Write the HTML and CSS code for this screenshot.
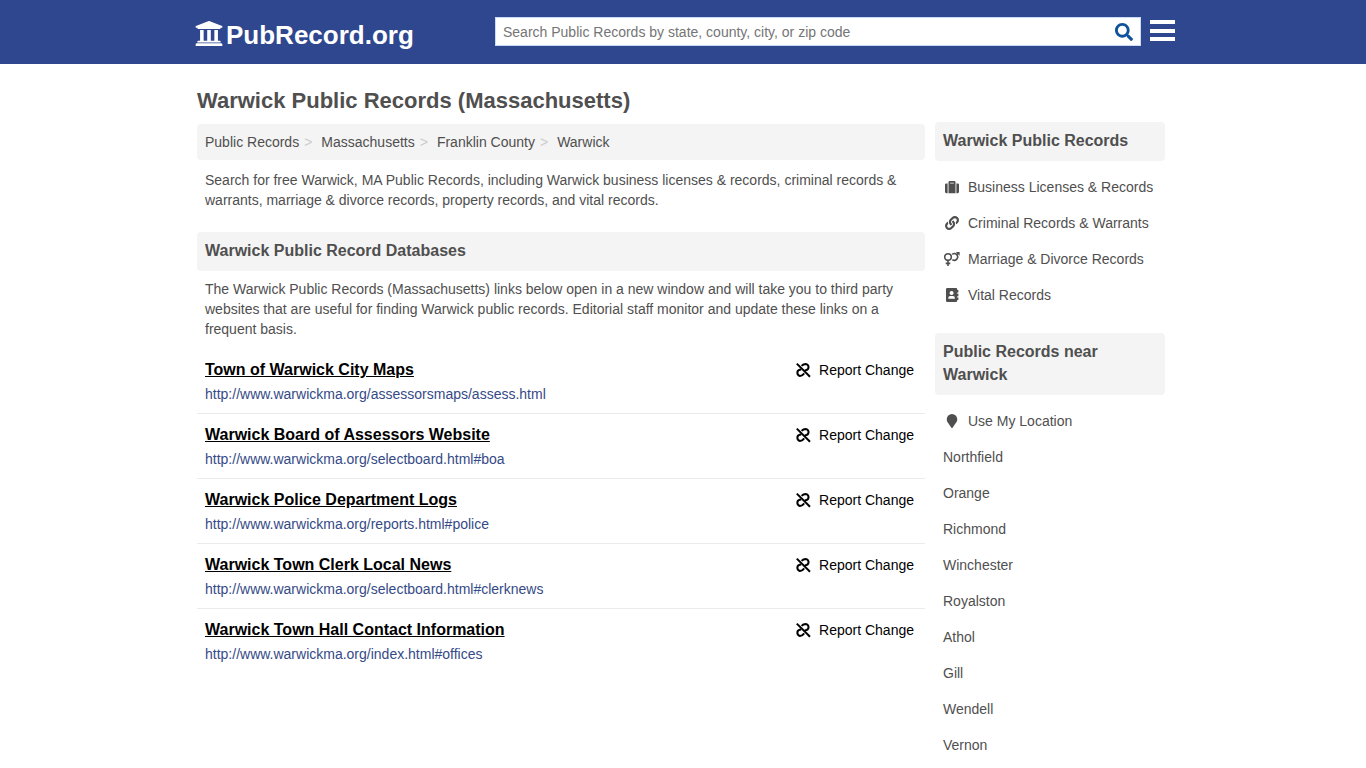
FILE: index.html
```html
<!DOCTYPE html>
<html lang="en">
<head>
<meta charset="utf-8">
<meta name="viewport" content="width=device-width, initial-scale=1">
<title>Warwick Public Records (Massachusetts)</title>
<link rel="stylesheet" href="styles.css">
</head>
<body>
<svg class="sprite" aria-hidden="true">
  <symbol id="i-unlink" viewBox="0 0 16 16"><g fill="none" stroke="currentColor" stroke-width="2"><path d="M1.800 1.600L15 14.800"/><path d="M6.600 3.900C8 2.200 9.300 1.900 10.800 1.900A3.200 3.200 0 0 1 11.600 8L9.800 8.200"/><path d="M6.200 7.400L4.600 7.700A3.200 3.200 0 0 0 5 13.900C7 13.900 8 12.900 9.200 11.300"/></g></symbol>
</svg>
<header class="topbar">
  <div class="shell topbar-inner">
    <a class="brand" href="#">
      <svg class="brand-icon" viewBox="16 32 480 448" aria-hidden="true"><path d="M496 128v16a8 8 0 0 1-8 8h-24v12c0 6.627-5.373 12-12 12H60c-6.627 0-12-5.373-12-12v-12H24a8 8 0 0 1-8-8v-16a8 8 0 0 1 4.941-7.392l232-88a7.996 7.996 0 0 1 6.118 0l232 88A8 8 0 0 1 496 128zm-24 304H40c-13.255 0-24 10.745-24 24v16a8 8 0 0 0 8 8h464a8 8 0 0 0 8-8v-16c0-13.255-10.745-24-24-24zM96 192v192H60c-6.627 0-12 5.373-12 12v20h416v-20c0-6.627-5.373-12-12-12h-36V192h-64v192h-64V192h-64v192h-64V192H96z"/></svg>
      <span>PubRecord.org</span>
    </a>
    <form class="search" role="search">
      <input class="search-input" type="text" aria-label="Search Public Records" placeholder="Search Public Records by state, county, city, or zip code">
      <button class="search-button" type="button" aria-label="Search"><svg viewBox="0 0 512 512" aria-hidden="true"><path d="M505 442.7L405.3 343c-4.500-4.500-10.600-7-17-7H372c27.600-35.300 44-79.700 44-128C416 93.100 322.900 0 208 0S0 93.100 0 208s93.100 208 208 208c48.300 0 92.700-16.400 128-44v16.300c0 6.400 2.500 12.500 7 17l99.700 99.700c9.400 9.400 24.600 9.400 33.900 0l28.300-28.300c9.400-9.400 9.400-24.600.1-34zM208 336c-70.700 0-128-57.200-128-128 0-70.700 57.200-128 128-128 70.700 0 128 57.200 128 128 0 70.700-57.200 128-128 128z"/></svg></button>
    </form>
    <button class="menu-button" type="button" aria-label="Menu"><span></span><span></span><span></span></button>
  </div>
</header>
<div class="shell page">
  <h1 class="page-title">Warwick Public Records (Massachusetts)</h1>
  <div class="columns">
    <main class="main">
      <nav aria-label="Breadcrumb">
        <ol class="breadcrumb">
          <li><a href="#">Public Records</a></li>
          <li><a href="#">Massachusetts</a></li>
          <li><a href="#">Franklin County</a></li>
          <li><a href="#">Warwick</a></li>
        </ol>
      </nav>
      <p class="copy intro">Search for free Warwick, MA Public Records, including Warwick business licenses &amp; records, criminal records &amp; warrants, marriage &amp; divorce records, property records, and vital records.</p>
      <h2 class="heading">Warwick Public Record Databases</h2>
      <p class="copy">The Warwick Public Records (Massachusetts) links below open in a new window and will take you to third party websites that are useful for finding Warwick public records. Editorial staff monitor and update these links on a frequent basis.</p>
      <ul class="records">
        <li class="record">
          <div><a class="record-title" href="#">Town of Warwick City Maps</a><span class="record-url">http://www.warwickma.org/assessorsmaps/assess.html</span></div>
          <a class="report" href="#"><svg aria-hidden="true"><use href="#i-unlink"/></svg>Report Change</a>
        </li>
        <li class="record">
          <div><a class="record-title" href="#">Warwick Board of Assessors Website</a><span class="record-url">http://www.warwickma.org/selectboard.html#boa</span></div>
          <a class="report" href="#"><svg aria-hidden="true"><use href="#i-unlink"/></svg>Report Change</a>
        </li>
        <li class="record">
          <div><a class="record-title" href="#">Warwick Police Department Logs</a><span class="record-url">http://www.warwickma.org/reports.html#police</span></div>
          <a class="report" href="#"><svg aria-hidden="true"><use href="#i-unlink"/></svg>Report Change</a>
        </li>
        <li class="record">
          <div><a class="record-title" href="#">Warwick Town Clerk Local News</a><span class="record-url">http://www.warwickma.org/selectboard.html#clerknews</span></div>
          <a class="report" href="#"><svg aria-hidden="true"><use href="#i-unlink"/></svg>Report Change</a>
        </li>
        <li class="record">
          <div><a class="record-title" href="#">Warwick Town Hall Contact Information</a><span class="record-url">http://www.warwickma.org/index.html#offices</span></div>
          <a class="report" href="#"><svg aria-hidden="true"><use href="#i-unlink"/></svg>Report Change</a>
        </li>
      </ul>
    </main>
    <aside class="side">
      <section>
        <h2 class="heading">Warwick Public Records</h2>
        <ul class="links">
          <li><a href="#"><svg viewBox="0 0 512 512" aria-hidden="true"><path d="M128 480h256V80c0-26.500-21.500-48-48-48H176c-26.500 0-48 21.500-48 48v400zm64-384h128v32H192V96zm320 80v256c0 26.500-21.500 48-48 48h-48V128h48c26.500 0 48 21.500 48 48zM96 480H48c-26.500 0-48-21.500-48-48V176c0-26.500 21.500-48 48-48h48v352z"/></svg>Business Licenses &amp; Records</a></li>
          <li><a href="#"><svg viewBox="0 0 512 512" aria-hidden="true"><path d="M326.612 185.391c59.747 59.809 58.927 155.698.36 214.59-.11.12-.24.25-.36.37l-67.2 67.2c-59.27 59.27-155.699 59.262-214.96 0-59.27-59.26-59.27-155.7 0-214.96l37.106-37.106c9.84-9.84 26.786-3.3 27.294 10.606.648 17.722 3.826 35.527 9.69 52.721 1.986 5.822.567 12.262-3.783 16.612l-13.087 13.087c-28.026 28.026-28.905 73.66-1.155 101.96 28.024 28.579 74.086 28.749 102.325.51l67.2-67.19c28.191-28.191 28.073-73.757 0-101.83-3.701-3.694-7.429-6.564-10.341-8.569a16.037 16.037 0 0 1-6.947-12.606c-.396-10.567 3.348-21.456 11.698-29.806l21.054-21.055c5.521-5.521 14.182-6.199 20.584-1.731a152.482 152.482 0 0 1 20.522 17.197zM467.547 44.449c-59.261-59.262-155.69-59.27-214.96 0l-67.2 67.2c-.12.12-.25.25-.36.37-58.566 58.892-59.387 154.781.36 214.59a152.454 152.454 0 0 0 20.521 17.196c6.402 4.468 15.064 3.789 20.584-1.731l21.054-21.055c8.35-8.35 12.094-19.239 11.698-29.806a16.037 16.037 0 0 0-6.947-12.606c-2.912-2.005-6.64-4.875-10.341-8.569-28.073-28.073-28.191-73.639 0-101.83l67.2-67.19c28.239-28.239 74.3-28.069 102.325.51 27.75 28.3 26.872 73.934-1.155 101.96l-13.087 13.087c-4.35 4.35-5.769 10.79-3.783 16.612 5.864 17.194 9.042 34.999 9.69 52.721.509 13.906 17.454 20.446 27.294 10.606l37.106-37.106c59.271-59.259 59.271-155.699.001-214.959z"/></svg>Criminal Records &amp; Warrants</a></li>
          <li><a href="#"><svg class="wide" viewBox="0 0 18 14" aria-hidden="true"><g fill="none" stroke="currentColor" stroke-width="1.600"><circle cx="5" cy="5" r="3.300"/><path d="M5 8.300V14M2.700 11.400H7.300M9.200 2.400a3.300 3.300 0 1 1 .1 5.200M13.300 3L15.800.900"/></g><path d="M12.800 0H16.600V3.800z"/></svg>Marriage &amp; Divorce Records</a></li>
          <li><a href="#"><svg viewBox="0 0 14 14" aria-hidden="true"><path fill-rule="evenodd" d="M2.200 0H11Q12.200 0 12.200 1.200V12.800Q12.200 14 11 14H2.200Q1 14 1 12.800V1.200Q1 0 2.200 0zM6.600 3a2 2 0 1 0 .01 0zM3.300 10.800H9.900V10Q9.900 7.900 7.900 7.900H5.300Q3.300 7.900 3.300 10zM12.200 2H13.400V4.500H12.200zM12.200 5.700H13.400V8.200H12.200zM12.200 9.400H13.400V11.900H12.200z"/></svg>Vital Records</a></li>
        </ul>
      </section>
      <section>
        <h2 class="heading">Public Records near Warwick</h2>
        <ul class="links">
          <li><a href="#"><svg viewBox="0 0 14 14" aria-hidden="true"><path d="M7 0a5.250 5.250 0 0 1 5.250 5.250C12.250 7.500 11.500 8 7.600 13.700a.750.750 0 0 1-1.200 0C2.500 8 1.750 7.500 1.750 5.250A5.250 5.250 0 0 1 7 0z"/></svg>Use My Location</a></li>
          <li><a href="#">Northfield</a></li>
          <li><a href="#">Orange</a></li>
          <li><a href="#">Richmond</a></li>
          <li><a href="#">Winchester</a></li>
          <li><a href="#">Royalston</a></li>
          <li><a href="#">Athol</a></li>
          <li><a href="#">Gill</a></li>
          <li><a href="#">Wendell</a></li>
          <li><a href="#">Vernon</a></li>
        </ul>
      </section>
    </aside>
  </div>
</div>
</body>
</html>
```
FILE: styles.css
```css
* { box-sizing: border-box; }
body {
  margin: 0;
  background: #fff;
  color: #4f4f4f;
  font: 14px/20px "Liberation Sans", Arial, sans-serif;
}
h1, h2, p, ul, ol { margin: 0; padding: 0; }
ul, ol { list-style: none; }
a { color: inherit; text-decoration: none; }
button { border: 0; padding: 0; background: none; cursor: pointer; }
svg { fill: currentColor; flex: none; }
.sprite { position: absolute; width: 0; height: 0; }

.shell { max-width: 984px; margin: 0 auto; }

.topbar { background: #2e478f; }
.topbar-inner {
  display: flex;
  align-items: center;
  min-height: 64px;
  padding-left: 4px;
}
.brand {
  display: flex;
  align-items: center;
  gap: 3px;
  width: 300px;
  padding-top: 5px;
  color: #fff;
  font-size: 26px;
  font-weight: 700;
  line-height: 30px;
}
.brand-icon { width: 28px; height: 25px; margin-bottom: 2px; }
.search {
  flex: 1;
  display: flex;
  align-items: center;
  height: 29px;
  margin-bottom: 1px;
  padding: 1px 7px 0 0;
  border: 1px solid #c9dcf5;
  background: #fff;
}
.search-input {
  flex: 1;
  min-width: 0;
  padding: 0 7px;
  border: 0;
  outline: 0;
  background: none;
  color: #4f4f4f;
  font: inherit;
}
.search-input::placeholder { color: #757575; opacity: 1; }
.search-button { display: flex; color: #0f529c; }
.search-button svg { width: 18px; height: 18px; }
.menu-button {
  display: flex;
  flex-direction: column;
  justify-content: space-between;
  width: 25px;
  height: 21px;
  margin: 0 0 3px 9px;
}
.menu-button span { width: 100%; height: 4px; background: #fff; }

.page { padding: 23px 10px 20px 6px; }
.page-title { font-size: 22px; line-height: 28px; }
.columns {
  display: flex;
  align-items: flex-start;
  gap: 10px;
  padding-top: 7px;
}
.main { flex: 1; min-width: 0; padding-top: 2px; }
.side { flex: none; width: 230px; display: grid; gap: 20px; }

.breadcrumb {
  display: flex;
  flex-wrap: wrap;
  padding: 8px;
  border-radius: 4px;
  background: #f4f4f4;
}
.breadcrumb li + li::before { content: ">"; padding: 0 9px 0 5px; color: #ccc; }
.copy { padding: 8px; }
.intro { padding: 10px 8px 22px; }
.heading {
  padding: 7px 8px 9px;
  border-radius: 4px;
  background: #f4f4f4;
  font-size: 16px;
  line-height: 23px;
}

.records { padding-top: 2px; }
.record {
  display: flex;
  justify-content: space-between;
  align-items: flex-start;
  padding: 9px 11px 9px 8px;
  border-bottom: 1px solid #ebebeb;
}
.record:last-child { border-bottom: 0; }
.record-title {
  display: table;
  margin-bottom: 2px;
  color: #000;
  font-size: 16px;
  font-weight: 700;
  line-height: 24px;
  text-decoration: underline;
}
.record-url { color: #354a87; }
.report {
  display: flex;
  align-items: center;
  gap: 8px;
  color: #000;
  line-height: 24px;
}
.report svg { width: 16px; height: 16px; }

.links { padding-top: 8px; }
.links a { display: flex; align-items: center; padding: 8px; }
.links svg { width: 14px; height: 14px; margin: 0 9px 0 2px; }
.links .wide { width: 18px; margin: 0 7px 0 0; }
```
